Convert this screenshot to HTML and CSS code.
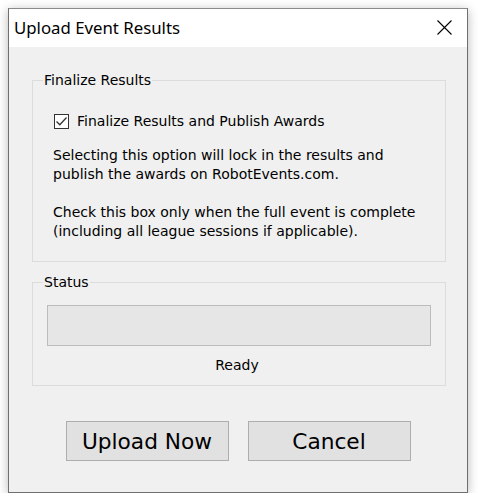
FILE: index.html
```html
<!DOCTYPE html>
<html>
<head>
<meta charset="utf-8">
<title>Upload Event Results</title>
<link rel="stylesheet" href="styles.css">
</head>
<body>
<div class="window">
  <div class="titlebar">
    <span class="title">Upload Event Results</span>
    <span class="close">
      <svg width="15" height="15" viewBox="0 0 15 15"><path d="M0.5 0.5 L14.5 14.5 M14.5 0.5 L0.5 14.5" stroke="#000" stroke-width="1.1" fill="none"/></svg>
    </span>
  </div>
  <div class="content">
    <fieldset class="group">
      <legend>Finalize Results</legend>
      <div class="group-body finalize-body">
        <label class="check-row">
          <span class="checkbox">
            <svg width="13" height="13" viewBox="0 0 13 13"><path d="M1.5 6.5 L4.8 9.8 L11.5 2.5" stroke="#333" stroke-width="1.3" fill="none"/></svg>
          </span>
          <span>Finalize Results and Publish Awards</span>
        </label>
        <div class="info">
          <p>Selecting this option will lock in the results and<br>publish the awards on RobotEvents.com.</p>
          <p>Check this box only when the full event is complete<br>(including all league sessions if applicable).</p>
        </div>
      </div>
    </fieldset>
    <fieldset class="group group-status">
      <legend>Status</legend>
      <div class="group-body status-body">
        <div class="progress"></div>
        <div class="status-text">Ready</div>
      </div>
    </fieldset>
    <div class="buttons">
      <button class="btn">Upload Now</button>
      <button class="btn">Cancel</button>
    </div>
  </div>
</div>
</body>
</html>
```
FILE: styles.css
```css
html, body {
  margin: 0;
  padding: 0;
  background: #ffffff;
}
body {
  padding: 8px 0 0 8px;
  font-family: "DejaVu Sans", sans-serif;
  font-size: 14px;
  color: #000;
}
.window {
  width: 460px;
  height: 485px;
  box-sizing: border-box;
  border: 1px solid #6f6f6f;
  border-top-color: #8a8a8a;
  background: #f0f0f0;
  box-shadow: 0 2px 10px rgba(0, 0, 0, 0.28);
  display: flex;
  flex-direction: column;
}
.titlebar {
  height: 38px;
  background: #fff;
  display: flex;
  align-items: center;
  justify-content: space-between;
  padding-left: 5px;
}
.title {
  font-family: "Noto Sans", sans-serif;
  font-size: 16.8px;
  line-height: 20px;
  color: #000;
  padding-bottom: 1px;
}
.close {
  width: 46px;
  height: 38px;
  display: flex;
  align-items: center;
  justify-content: center;
  padding-bottom: 2px;
  box-sizing: border-box;
}
.close svg { display: block; }
.content {
  padding: 25px 21px 0 23px;
  display: flex;
  flex-direction: column;
}
.group {
  margin: 0;
  padding: 0;
  border: 1px solid #dcdcdc;
  min-width: 0;
}
.group legend {
  margin-left: 10px;
  padding: 0 1px;
  line-height: 16px;
  font-size: 14px;
}
.finalize-body {
  padding: 23px 20px 20px 20px;
}
.check-row {
  display: flex;
  align-items: center;
  height: 20px;
  padding-left: 1px;
}
.checkbox {
  width: 15px;
  height: 15px;
  box-sizing: border-box;
  border: 1px solid #333;
  background: #fff;
  display: flex;
  align-items: center;
  justify-content: center;
  margin-right: 8px;
}
.checkbox svg { display: block; }
.info {
  margin-top: 15px;
  line-height: 19px;
}
.info p {
  margin: 0;
}
.info p + p {
  margin-top: 19px;
}
.group-status {
  margin-top: 12px;
}
.status-body {
  padding: 15px 14px 10px 14px;
}
.progress {
  height: 41px;
  box-sizing: border-box;
  border: 1px solid #bcbcbc;
  background: #e6e6e6;
}
.status-text {
  margin-top: 9px;
  line-height: 20px;
  text-align: center;
  padding-right: 4px;
}
.buttons {
  margin-top: 35px;
  display: flex;
  justify-content: center;
  gap: 19px;
  padding-right: 2px;
}
.btn {
  width: 163px;
  height: 40px;
  box-sizing: border-box;
  border: 1px solid #adadad;
  background: #e1e1e1;
  font-family: "DejaVu Sans", sans-serif;
  font-size: 21.7px;
  color: #000;
  padding: 0;
  margin: 0;
}
```
